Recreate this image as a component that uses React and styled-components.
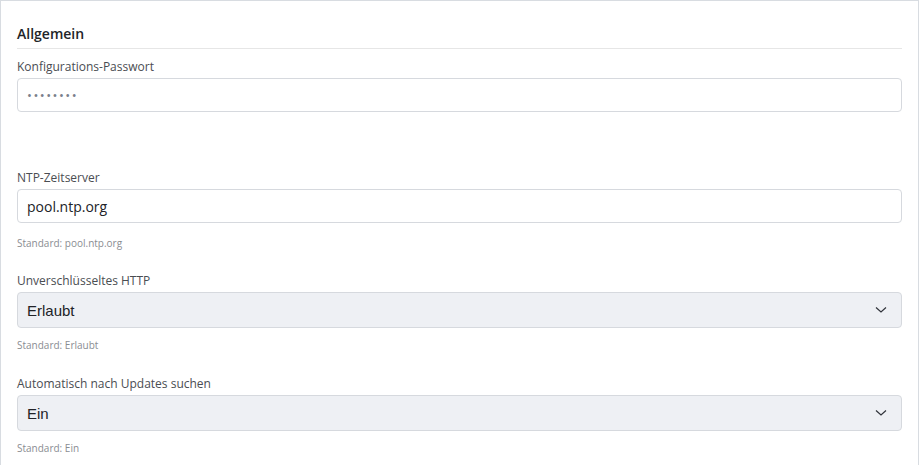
import styled, { createGlobalStyle } from 'styled-components'

const GlobalStyle = createGlobalStyle`
  body {
    margin: 0;
    background: #ffffff;
    font-family: "Open Sans", "Noto Sans", sans-serif;
  }
`

const Card = styled.section`
  width: 919px;
  min-height: 465px;
  box-sizing: border-box;
  border: 1px solid #d8dce1;
  border-bottom: none;
  padding: 23px 16px 0;
  background: #fff;
`

const Heading = styled.h3`
  margin: 0 0 9px;
  padding-bottom: 4px;
  border-bottom: 1px solid #e6e6e6;
  font-size: 14px;
  line-height: 20px;
  font-weight: 600;
  color: #222428;
`

const Field = styled.div`
  margin-bottom: ${(p) => p.$spacing}px;
`

const Label = styled.label`
  display: block;
  font-size: 12px;
  line-height: 18px;
  margin-bottom: 2px;
  color: #4a4d52;
`

const Control = styled.div`
  height: ${(p) => (p.$select ? '36px' : '34px')};
  box-sizing: border-box;
  display: flex;
  align-items: center;
  justify-content: space-between;
  padding: 0 14px 0 9px;
  border: 1px solid #d6d9de;
  border-radius: 4px;
  background: ${(p) => (p.$select ? '#eef0f4' : '#ffffff')};
  color: #212327;
  font-family: ${(p) => (p.$select ? '"Liberation Sans", Arial, sans-serif' : '"Open Sans", sans-serif')};
  font-size: ${(p) => (p.$select ? '15px' : '14px')};
`

const Dots = styled.span`
  color: #7a808b;
  font-size: 13px;
  letter-spacing: 1.5px;
`

const Chevron = styled.svg`
  width: 12px;
  height: 8px;
  flex-shrink: 0;
`

const Hint = styled.div`
  margin-top: ${(p) => p.$offset}px;
  font-size: 10px;
  line-height: 14px;
  color: #8a8d92;
`

function ChevronDown () {
    return (
        <Chevron viewBox="0 0 12 8">
            <polyline points="1,1.5 6,6 11,1.5" fill="none" stroke="#30333a" strokeWidth="1.2" />
        </Chevron>
    )
}

function App () {
    return (
        <>
            <GlobalStyle />
            <Card>
                <Heading>Allgemein</Heading>

                <Field $spacing={57}>
                    <Label>Konfigurations-Passwort</Label>
                    <Control><Dots>••••••••</Dots></Control>
                </Field>

                <Field $spacing={22}>
                    <Label>NTP-Zeitserver</Label>
                    <Control>pool.ntp.org</Control>
                    <Hint $offset={13}>Standard: pool.ntp.org</Hint>
                </Field>

                <Field $spacing={23}>
                    <Label>Unverschlüsseltes HTTP</Label>
                    <Control $select>Erlaubt<ChevronDown /></Control>
                    <Hint $offset={10}>Standard: Erlaubt</Hint>
                </Field>

                <Field $spacing={23}>
                    <Label>Automatisch nach Updates suchen</Label>
                    <Control $select>Ein<ChevronDown /></Control>
                    <Hint $offset={10}>Standard: Ein</Hint>
                </Field>
            </Card>
        </>
    )
}

export default App
